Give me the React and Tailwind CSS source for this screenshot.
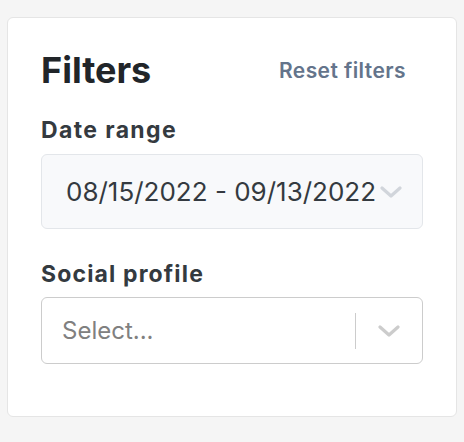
import React from "react";

const Chevron = ({ className }) => (
  <svg
    viewBox="0 0 22 12"
    className={className}
    fill="none"
    stroke="currentColor"
    strokeWidth="3.2"
    strokeLinecap="round"
    strokeLinejoin="round"
  >
    <polyline points="2,2 11,10 20,2" />
  </svg>
);

const App = () => {
  return (
    <div
      className="min-h-screen bg-[#f5f5f5] pt-[17px] px-[7px]"
      style={{ fontFamily: "Inter, 'Noto Sans', sans-serif" }}
    >
      <div className="bg-white border border-[#e5e5e5] rounded-[6px] px-[33px] pt-[34px] pb-[52px]">
        {/* HEADER */}
        <div className="flex items-center justify-between h-[36px]">
          <h1 className="text-[36px] leading-none font-bold text-[#212529]">
            Filters
          </h1>
          <button className="text-[21px] leading-none font-semibold text-[#64748b] mr-[17px] tracking-[0.02em]">
            Reset filters
          </button>
        </div>

        {/* DATE RANGE */}
        <label className="block mt-[31px] text-[23px] leading-none font-bold text-[#343a40] tracking-[0.06em]">
          Date range
        </label>
        <div className="mt-[12px] h-[75px] bg-[#f8f9fb] border border-[#e3e6ea] rounded-[6px] flex items-center justify-between pl-[24px] pr-[20px]">
          <span className="text-[26px] leading-none text-[#343a40] whitespace-nowrap">
            08/15/2022 - 09/13/2022
          </span>
          <Chevron className="w-[22px] h-[12px] text-[#d1d5db] flex-none" />
        </div>

        {/* SOCIAL PROFILE */}
        <label className="block mt-[34px] text-[23px] leading-none font-bold text-[#343a40] tracking-[0.05em]">
          Social profile
        </label>
        <div className="mt-[11px] h-[67px] border border-[#cccccc] rounded-[6px] flex items-center">
          <span className="flex-1 pl-[20px] text-[24px] leading-none text-[#808080]">
            Select...
          </span>
          <div className="w-px h-[36px] bg-[#cccccc]" />
          <div className="w-[66px] flex items-center justify-center">
            <Chevron className="w-[22px] h-[12px] text-[#cccccc]" />
          </div>
        </div>
      </div>
    </div>
  );
};

export default App;
